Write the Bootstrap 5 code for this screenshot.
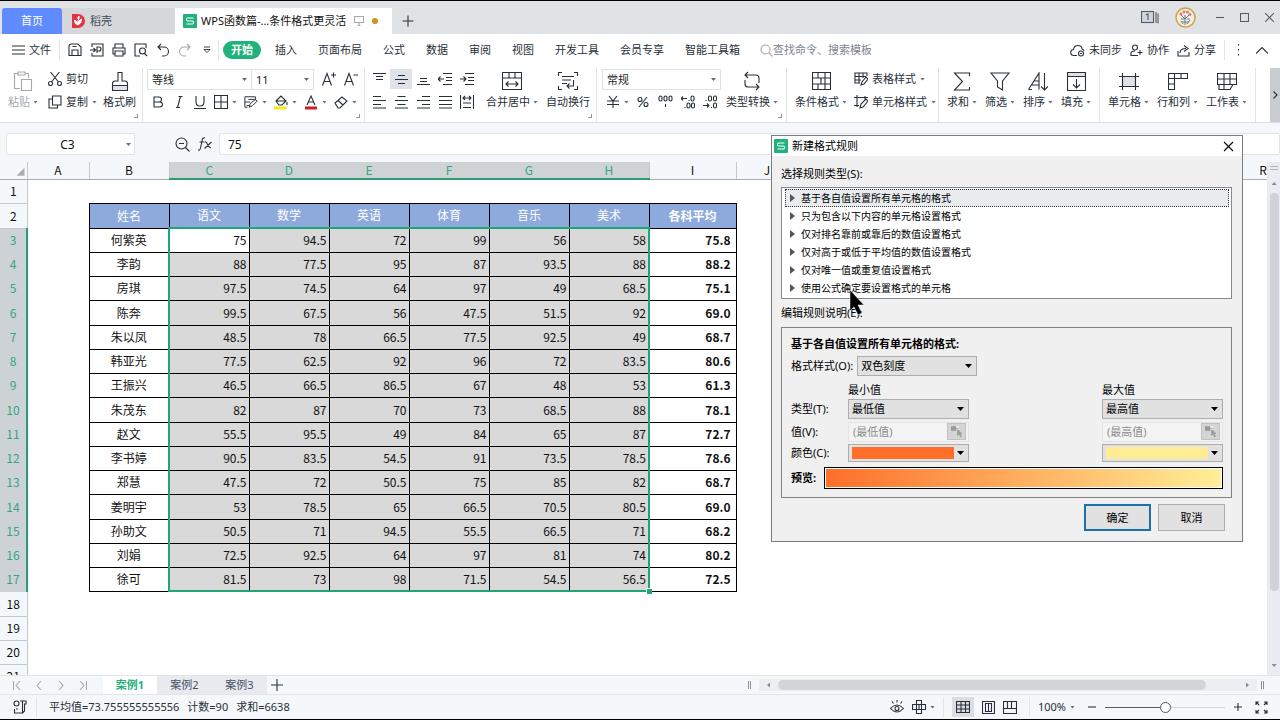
<!DOCTYPE html>
<html lang="zh-CN">
<head>
<meta charset="utf-8">
<meta name="viewport" content="width=device-width, initial-scale=1">
<title>WPS函数篇 - 条件格式更灵活</title>
<link href="https://cdn.jsdelivr.net/npm/bootstrap@5.3.0/dist/css/bootstrap.min.css" rel="stylesheet">
<style>
:root{--ink:#27303a;--green:#1fa678;--pane:#f5f8fa;--rule:#e2e5e7}
body{font-family:"Noto Sans","Noto Sans CJK SC",sans-serif;font-size:11px;line-height:16px;color:var(--ink);background:#fff}
button,input,select{font:inherit;color:inherit}
svg{display:block;fill:none;stroke:currentColor;stroke-width:1.1;flex:none}
.app{border-top:1px solid #000;border-bottom:1px solid #000}
.tbtn{border:0;background:none;padding:0;display:flex;align-items:center;justify-content:center;white-space:nowrap;color:inherit}
.vline{width:1px;height:20px;background:var(--rule);flex:none}
.caret{width:5px;height:3px;background:#6a7178;clip-path:polygon(0 0,100% 0,50% 100%);flex:none}
.faded{color:#a3a8ad}

/* title bar */
.titlebar{height:33px;background:#e0e3e5;padding-left:2px}
.wtab{height:26px;white-space:nowrap}
.wtab-home{width:60px;background:#5f8bff;color:#fff;border-radius:3px 3px 0 0}
.wtab-docer{width:113px;background:#d5d7db;color:#444c57}
.wtab-doc{width:217px;background:#fff;color:#111}
.wtab-add{margin-left:10px}
.dot{width:6px;height:6px;border-radius:50%;background:#c8961e}
.winbtns{color:#555c65;gap:16px;padding-right:6px}
.winbtns .avatar{margin-right:4px}

/* menu */
.menubar{height:32px;white-space:nowrap}
.menubar a{color:inherit;text-decoration:none}
.menutabs{gap:21px}
.menutabs .current{background:#1fb27a;color:#fff;font-weight:700;border-radius:9px;height:18px;width:38px;margin-right:-7px}
.searchbox{margin-left:20px}
.search{border:0;width:98px;padding:0;background:none;outline:0}
.search::placeholder{color:#7d8590;opacity:1}

/* ribbon */
.ribbon{height:57px;border-bottom:1px solid #dcdfe1;padding-top:2px}
.rgroup{position:relative;display:flex;align-items:flex-start;height:54px;border-right:1px solid var(--rule);flex:none;padding:0 8px}
.rgroup.launch::after{content:"";position:absolute;right:4px;bottom:4px;width:4px;height:4px;border:solid #8a9097;border-width:0 1px 1px 0}
.g-clip{gap:10px;padding-right:6px}
.g-clip .brush{margin-left:-4px}
.g-font{padding:0 6px 0 4px}
.g-align{padding:0 6px 0 3px;gap:8px}
.g-num{padding-left:5px;gap:5px}
.g-style{gap:7px;padding-right:2px}
.fontrow{gap:7px;padding-left:4px}
.tool-lg{flex-direction:column;justify-content:flex-start;height:46px}
.tool-lg .pic{height:26px;display:flex;align-items:center}
.tool-lg .cap{height:16px;display:flex;align-items:center;gap:3px}
.rrow{height:22px;display:flex;align-items:center}
.rrow+.rrow{margin-top:1px}
.cell5{width:22px;height:20px}
.cell5.on{background:#dfe2e8}
.combo{height:21px;border:1px solid #dfe2e4;border-radius:0;padding:0 14px 0 4px;font-size:11px;line-height:19px;color:#222;background-color:#fff;background-position:right 4px center;background-size:5px 3px;--bs-form-select-bg-img:url("data:image/svg+xml,%3Csvg xmlns='http://www.w3.org/2000/svg' viewBox='0 0 5 3'%3E%3Cpath d='M0 0h5L2.5 3z' fill='%23666'/%3E%3C/svg%3E")}
.combo-font{width:105px}
.combo-size{width:62px}
.combo-num{width:119px}
.more{width:10px;height:54px;background:#c9ccd0}

/* formula bar */
.fbar{height:39px;background:var(--pane);padding:10px 0 0 6px}
.fbar input{height:22px;border:1px solid #dfe3e6;background:#fff;border-radius:2px;font-size:12px;color:#111}
.namebox{width:129px}
.namewrap{position:relative}
.namewrap .caret{position:absolute;right:4px;top:10px}
.fxtools{height:22px;gap:8px;padding:0 7px 0 40px}

/* sheet */
.sheetwrap{min-height:0;background:#fff}
.sheetview{min-width:0;overflow:hidden;border-right:1px solid #e6e9eb}
.grid-sheet{table-layout:fixed;border-collapse:collapse;width:1294px;font-family:"Noto Sans CJK SC",sans-serif;font-size:12px;line-height:16px;color:#111}
.grid-sheet th,.grid-sheet td{padding:0;white-space:nowrap;overflow:hidden}
.grid-sheet thead tr{height:17px}
.grid-sheet tbody tr{height:24px}
.grid-sheet tbody tr:nth-child(4n+2){height:25px}
.grid-sheet th{font-weight:400;text-align:center;background:var(--pane);border:1px solid #c3c8cc;line-height:16px}
.grid-sheet th:first-child{border-left:0}
.grid-sheet thead th{border-top:0;border-bottom-color:#a9aeb2}
.grid-sheet thead th.hot{border:0;border-bottom:2px solid #2a9d75;background:#cfd3d6;color:#35a582}
.grid-sheet tbody th.hot{background:#cdd2d6;color:#35a582;border-color:#cdd2d6;border-right:2px solid #2a9d75}
.grid-sheet td.box{border:1px solid #000}
.grid-sheet td.head{background:#8ea9db;color:#fff;text-align:center}
.grid-sheet td.name{text-align:center}
.grid-sheet td.num{text-align:right;padding-right:2px;background:#d9d9d9}
.grid-sheet td.first{background:#fff}
.grid-sheet td.avg{text-align:right;padding-right:5px;font-weight:700}
.grid-sheet td.g-t{border-top:2px solid var(--green)}
.grid-sheet td.g-b{border-bottom:2px solid var(--green)}
.grid-sheet td.g-l{border-left:2px solid var(--green)}
.grid-sheet td.g-r{border-right:2px solid var(--green)}
.grid-sheet td.g-b.g-r{position:relative;overflow:visible}
.grid-sheet td.g-b.g-r::after{content:"";position:absolute;right:-4px;bottom:-4px;width:6px;height:6px;background:var(--green);border:solid #fff;border-width:1px 0 0 1px}
.corner{width:8px;height:8px;margin:3px 2px 0 auto;background:#a9adb0;clip-path:polygon(100% 0,100% 100%,0 100%)}
.vbar{width:12px;background:#e9ecf0}
.vbar .split{width:8px;height:4px;border:1px solid #aeb3b8;border-width:1px 0}
.vthumb{width:9px;height:398px;border-radius:4px;background:#d0d4d8}
.tri-u,.tri-d{width:5px;height:3px;background:#858a90;clip-path:polygon(50% 0,100% 100%,0 100%)}
.tri-d{clip-path:polygon(0 0,100% 0,50% 100%)}
.tri-l,.tri-r{width:3px;height:5px;background:#858a90;clip-path:polygon(0 50%,100% 0,100% 100%)}
.tri-r{clip-path:polygon(0 0,100% 50%,0 100%)}

/* sheet tabs and status */
.tabsbar{height:20px;background:var(--pane);border-top:1px solid var(--rule);border-bottom:1px solid var(--rule)}
.snav{width:103px;gap:14px;padding-left:13px}
.stab{width:55px;height:18px;background:#e8eaef;color:#454f63}
.stab.on{width:54px;background:#fff;color:#1fb27a;font-weight:700}
.grip{width:3px;height:8px;border:solid #8b9096;border-width:0 1px}
.hbar{width:498px;height:12px;background:#eceff1}
.hthumb{height:10px;border-radius:5px;background:#d1d5d8}
.status{height:24px;background:var(--pane);white-space:nowrap;padding-left:12px}
.status .on{background:#dadde1;height:20px}
.zoomer{appearance:none;-webkit-appearance:none;width:120px;height:12px;background:linear-gradient(90deg,#565b60 50%,#d4d7da 50%) center/100% 1px no-repeat}
.zoomer::-webkit-slider-thumb{-webkit-appearance:none;width:11px;height:11px;border-radius:50%;border:1px solid #555;background:#fff}

/* dialog */
.dlg{position:absolute;top:134px;right:37px;width:472px;background:#f0f0f0;border:1px solid #7c7c7c;color:#000}
.dlg-title{height:20px;background:#fff;padding:0 8px 0 2px}
.dlg-body{padding:10px 10px 10px 9px}
.dlg-body label,.dlg-body .lbl{line-height:16px;white-space:nowrap}
.rules{border:1px solid #828790;background:#fff;padding:1px 2px 1px 3px;margin:5px 0 6px;border-radius:0}
.rules .list-group-item{height:18px;border:1px solid transparent;border-radius:0;padding:0 0 0 4px;color:#000;display:flex;align-items:center;gap:5px;font-size:10px;line-height:16px;background:#fff}
.rules .list-group-item.chosen{border:1px dotted #333;background:#e8ecee}
.rules .list-group-item::before{content:"";width:5px;height:8px;margin-right:1px;background:#555;clip-path:polygon(0 0,100% 50%,0 100%)}
.panel{border:1px solid #828282;padding:8px 8px 8px 9px;margin-top:6px}
.fields{display:grid;grid-template-columns:57px 121px 1fr 121px;align-items:center;grid-template-rows:22px 22px 23px 20px}
.fields .colhead{align-self:end}
.fields .maxcol{grid-column:4}
.dsel{height:20px;padding:0 16px 0 3px;line-height:18px;font-size:11px;color:#000;background-color:#e1e1e1;border:1px solid #adadad;border-radius:0;background-position:right 4px center;background-size:7px 4px;--bs-form-select-bg-img:url("data:image/svg+xml,%3Csvg xmlns='http://www.w3.org/2000/svg' viewBox='0 0 7 4'%3E%3Cpath d='M0 0h7L3.5 4z' fill='%23000'/%3E%3C/svg%3E")}
.w-style{width:120px}
.dval{height:20px;border:1px solid #e3e3e3;background:#f3f3f3;padding:0 2px 0 0}
.dval input{width:94px;border:0;background:none;padding:0 0 0 4px;color:#8d8d8d}
.pick{width:19px;height:17px;border:1px solid #c2c2c2;background:#d4d4d4;color:#999}
.dcolor{height:18px;width:121px;border:1px solid #adadad;background:#e1e1e1;padding:2px 4px 2px 3px;justify-content:space-between}
.swatch{width:102px;height:12px}
.bcaret{width:7px;height:4px;background:#000;clip-path:polygon(0 0,100% 0,50% 100%)}
.preview{height:22px;border:1px solid #000;background:#fff;padding:1px}
.preview div{height:18px;background:linear-gradient(90deg,#ff6f2a,#ffef98)}
.dbtns{gap:7px;padding:6px 7px 0 0}
.dbtn{width:67px;height:27px;border:1px solid #adadad;background:#e1e1e1}
.dbtn.main{border:2px solid #1a70ad}
.pointer{position:absolute;left:76px;top:154px;z-index:3}
</style>
</head>
<body>
<div class="app d-flex flex-column vh-100 overflow-hidden position-relative">

<header class="titlebar d-flex align-items-end flex-shrink-0">
  <button class="tbtn wtab wtab-home">首页</button>
  <button class="tbtn wtab wtab-docer justify-content-start ps-2 gap-1">
    <svg width="16" height="14" viewBox="0 0 16 14"><path d="M2 0h6a7 7 0 0 1 0 14H2z" fill="#e23340" stroke="none"/><path d="M8 11V6M8 11Q4 10 4.500 6Q8 7 8 11Q12 9 11.500 5Q8 6 8 10M8 5Q7 3 9 2Q10 4 8 6" fill="#fff" stroke="#fff" stroke-width=".8"/></svg>稻壳</button>
  <button class="tbtn wtab wtab-doc justify-content-start ps-2 gap-1">
    <svg width="14" height="14" viewBox="0 0 14 14"><rect width="14" height="14" rx="1" fill="#20b17c" stroke="none"/><path d="M10.500 4H4.500Q3.500 4 3.500 5.500T4.500 7H9.500Q10.500 7 10.500 8.500T9.500 10H3.500" stroke="#fff"/></svg>
    <span>WPS函数篇-...条件格式更灵活</span>
    <svg class="faded ms-1" width="10" height="10" viewBox="0 0 10 10"><path d="M.5.5h9v6h-9zM3.500 9.500h3M5 6.500v3"/></svg><span class="dot ms-1"></span></button>
  <button class="tbtn wtab wtab-add" aria-label="新建"><svg width="12" height="12" viewBox="0 0 12 12" stroke-width="1.600"><path d="M6 .5v11M.5 6h11"/></svg></button>
  <div class="winbtns ms-auto align-self-center d-flex align-items-center">
    <svg width="18" height="13" viewBox="0 0 18 13"><rect x=".5" y=".5" width="12" height="11" fill="#cfd6df"/><path d="M5 4l2-1v6M15 1v11M17 2.500v10"/></svg>
    <svg class="avatar ms-n2" width="21" height="21" viewBox="0 0 21 21"><circle cx="10.500" cy="10.500" r="9.500" fill="#f2ede6" stroke="#d6a03a" stroke-width="1.500"/><path d="M10 18V8M10 12L6 8M10 12l4-4M8 17l-2-3M12 17l3-4" stroke="#5a6a6d" stroke-width=".9"/><g fill="#d3806e" stroke="none"><circle cx="6" cy="7" r="1.600"/><circle cx="9" cy="5" r="1.400"/><circle cx="12.500" cy="5" r="1.500"/><circle cx="15" cy="7.500" r="1.400"/></g><path d="M6 12h3M12 12h3M7 15h7" stroke="#77807c"/></svg>
    <svg width="8" height="9" viewBox="0 0 8 9" stroke-width="1"><path d="M0 4.500h8"/></svg>
    <svg width="9" height="9" viewBox="0 0 9 9" stroke-width="1"><path d="M.5.5h8v8h-8z"/></svg>
    <svg width="9" height="9" viewBox="0 0 9 9" stroke-width="1"><path d="M0 0l9 9M9 0L0 9"/></svg>
  </div>
</header>

<nav class="menubar d-flex align-items-center flex-shrink-0">
  <a href="#" class="d-flex align-items-center gap-1 ps-2 ms-1"><svg width="13" height="10" viewBox="0 0 13 10"><path d="M0 1h13M0 5h13M0 9h13"/></svg><span>文件</span></a>
  <div class="vline ms-2 me-2"></div>
  <div class="d-flex align-items-center gap-2">
    <button class="tbtn" aria-label="保存"><svg width="14" height="14" viewBox="0 0 14 14"><path d="M1 12.500V3.500Q1 1 3.500 1H10l3 3v8.500zM4 12.500V7h6v5.500M4.500 3.500h4"/></svg></button>
    <button class="tbtn" aria-label="输出PDF"><svg width="14" height="14" viewBox="0 0 14 14"><path d="M2 4V1h11v12H2v-3M0 7h5M3.500 5L5.500 7l-2 2M7 10V4h2q2 0 2 2t-2 2H7"/></svg></button>
    <button class="tbtn" aria-label="打印"><svg width="14" height="14" viewBox="0 0 14 14"><path d="M3 5V1h8v4M3 11H1V5h12v6h-2M3 8h8v5H3z"/></svg></button>
    <button class="tbtn" aria-label="打印预览"><svg width="14" height="14" viewBox="0 0 14 14"><path d="M6 13H1V1h11v4"/><circle cx="8.500" cy="8" r="3"/><path d="M10.500 10.500L13 13"/></svg></button>
    <button class="tbtn" aria-label="撤消"><svg width="14" height="14" viewBox="0 0 14 14"><path d="M5 1L2 4l3 3M2 4h6a4 4 0 0 1 0 9H6"/></svg></button>
    <button class="tbtn faded" aria-label="恢复"><svg width="14" height="14" viewBox="0 0 14 14"><path d="M9 1l3 3-3 3M12 4H6a4 4 0 0 0 0 9h2"/></svg></button>
    <button class="tbtn" aria-label="更多"><svg width="14" height="8" viewBox="0 0 14 8"><path d="M4 1h6M4 3.500l3 3 3-3z" stroke-width=".9"/></svg></button>
  </div>
  <div class="vline ms-1 me-1"></div>
  <div class="menutabs d-flex align-items-center">
    <a href="#" class="current d-flex align-items-center justify-content-center">开始</a>
    <a href="#">插入</a><a href="#">页面布局</a><a href="#">公式</a><a href="#">数据</a><a href="#">审阅</a><a href="#">视图</a><a href="#">开发工具</a><a href="#">会员专享</a><a href="#">智能工具箱</a>
  </div>
  <label class="searchbox d-flex align-items-center"><svg class="faded" width="13" height="13" viewBox="0 0 13 13"><circle cx="5.500" cy="5.500" r="4.500"/><path d="M9 9l3.500 3.500"/></svg><input class="search" placeholder="查找命令、搜索模板" aria-label="搜索"></label>
  <div class="ms-auto d-flex align-items-center gap-2">
    <a href="#" class="d-flex align-items-center gap-1"><svg width="15" height="13" viewBox="0 0 15 13"><path d="M7 11.500H4a3 3 0 0 1-.5-6Q4 1.500 8 1.500T12 5q2 .5 2 2"/><circle cx="11" cy="9.500" r="2.500"/><path d="M10 9.500h2"/></svg>未同步</a>
    <a href="#" class="d-flex align-items-center gap-1"><svg width="13" height="13" viewBox="0 0 13 13"><circle cx="5" cy="3.500" r="2.500"/><path d="M8 11.500H1V9.500Q1 7 5 7M10 6v5M7.500 8.500h5"/></svg>协作</a>
    <a href="#" class="d-flex align-items-center gap-1"><svg width="13" height="13" viewBox="0 0 13 13"><path d="M1 7v5h11V8M3 9Q3 4.500 9 4.500M7 1.500l4 3-4 3"/></svg>分享</a>
    <div class="vline"></div>
    <button class="tbtn ps-1" aria-label="选项"><svg width="3" height="12" viewBox="0 0 3 12" stroke-width="1.500"><path d="M1.500 0v1.500M1.500 5v1.500M1.500 10v1.500"/></svg></button>
    <button class="tbtn ps-2 pe-2 me-1" aria-label="收起"><svg width="12" height="7" viewBox="0 0 12 7"><path d="M0 6.500l6-6 6 6"/></svg></button>
  </div>
</nav>

<section class="ribbon d-flex flex-shrink-0 overflow-hidden">
  <div class="rgroup launch g-clip">
    <button class="tbtn tool-lg faded"><span class="pic"><svg width="20" height="20" viewBox="0 0 20 20"><path d="M7 17.500H1.500v-15H5M12 2.500h3.500V7M5 1h7v3H5zM8.500 8.500h10v11h-10z"/></svg></span><span class="cap">粘贴<i class="caret"></i></span></button>
    <div>
      <div class="rrow"><button class="tbtn gap-1"><svg width="14" height="14" viewBox="0 0 14 14"><path d="M2.500 0l8 10M11.500 0l-8 10"/><circle cx="2.500" cy="11.500" r="2"/><circle cx="11.500" cy="11.500" r="2"/></svg>剪切</button></div>
      <div class="rrow"><button class="tbtn gap-1"><svg width="14" height="14" viewBox="0 0 14 14"><path d="M4.500 1h8.500v9H4.500zM4.500 4H1v9h8.500v-3"/></svg>复制<i class="caret"></i></button></div>
    </div>
    <button class="tbtn tool-lg brush"><span class="pic"><svg width="18" height="21" viewBox="0 0 18 21"><path d="M1.500 14.500v5h15v-5z" fill="#dfe2e6" stroke="none"/><path d="M1.500 14.500h15M1.500 19.500v-7Q1.500 10 4 10h3V1.500h4V10h3q2.500 0 2.500 2.500v7z"/></svg></span><span class="cap">格式刷</span></button>
  </div>
  <div class="rgroup launch g-font">
    <div>
      <div class="rrow">
        <select class="form-select combo combo-font" aria-label="字体"><option>等线</option></select><select class="form-select combo combo-size border-start-0" aria-label="字号"><option>11</option></select>
        <button class="tbtn ms-2" aria-label="增大字号"><svg width="14" height="14" viewBox="0 0 14 14"><path d="M.5 13.500L5 1.500l4.500 12M2 9.500h6M9 3h5M11.500.5v5"/></svg></button>
        <button class="tbtn ms-2" aria-label="减小字号"><svg width="14" height="14" viewBox="0 0 14 14"><path d="M.5 13.500L5 1.500l4.500 12M2 9.500h6M9.500 3h4.500"/></svg></button>
      </div>
      <div class="rrow fontrow">
        <button class="tbtn" aria-label="加粗"><svg width="14" height="14" viewBox="0 0 14 14" stroke-width="2"><path d="M3 2h5q2.500 0 2.500 2.500T8 7H3zM3 7h5.500Q11.500 7 11.500 9.500T8.500 12H3z"/></svg></button>
        <button class="tbtn" aria-label="倾斜"><svg width="14" height="14" viewBox="0 0 14 14"><path d="M6.500 1.500h4M4 12.500h4M8.500 1.500l-3 11"/></svg></button>
        <button class="tbtn" aria-label="下划线"><svg width="14" height="14" viewBox="0 0 14 14"><path d="M3 1v6q0 4 4 4t4-4V1M1 13.500h12"/></svg></button>
        <button class="tbtn gap-1" aria-label="边框"><svg width="14" height="14" viewBox="0 0 14 14"><path d="M.5.5h13v13H.5zM7 .5v13M.5 7h13"/></svg><i class="caret"></i></button>
        <button class="tbtn gap-1" aria-label="绘图边框"><svg width="14" height="14" viewBox="0 0 16 14"><path d="M4 13H1V1h12v4M1 7h6M5 4h7M6 13l1-4 6-5 2 2-5 5zM3 11h3"/></svg><i class="caret"></i></button>
        <button class="tbtn gap-1" aria-label="填充颜色"><svg width="14" height="15" viewBox="0 0 14 15"><path d="M2 6l5-5 5 5-4 4H5zM2 6h10"/><path d="M13 7v3"/><path d="M0 13h13" stroke="#f5ea20" stroke-width="3"/></svg><i class="caret"></i></button>
        <button class="tbtn gap-1" aria-label="字体颜色"><svg width="14" height="15" viewBox="0 0 14 15"><path d="M3 10L7 1l4 9M4.500 7h5"/><path d="M1 13h12" stroke="#c81e28" stroke-width="3"/></svg><i class="caret"></i></button>
        <button class="tbtn gap-1" aria-label="清除"><svg width="14" height="14" viewBox="0 0 14 14"><path d="M1 8l7-6 5 4-7 7H4zM4 5.500l5 4.500"/></svg><i class="caret"></i></button>
      </div>
    </div>
  </div>
  <div class="rgroup launch g-align">
    <div>
      <div class="rrow">
        <button class="tbtn cell5" aria-label="顶端对齐"><svg width="13" height="14" viewBox="0 0 13 14"><path d="M0 1.500h13M3 4.500h7M3 7.500h7"/></svg></button>
        <button class="tbtn cell5 on" aria-label="垂直居中"><svg width="13" height="14" viewBox="0 0 13 14"><path d="M3 3.500h7M0 7.500h13M3 11.500h7"/></svg></button>
        <button class="tbtn cell5" aria-label="底端对齐"><svg width="13" height="14" viewBox="0 0 13 14"><path d="M3 6.500h7M3 9.500h7M0 12.500h13"/></svg></button>
        <button class="tbtn cell5" aria-label="减少缩进"><svg width="14" height="14" viewBox="0 0 14 14"><path d="M5 1.500h9M8 5.500h6M8 8.500h6M5 12.500h9M0 7h6M2.500 4.500L0 7l2.500 2.500"/></svg></button>
        <button class="tbtn cell5" aria-label="增加缩进"><svg width="14" height="14" viewBox="0 0 14 14"><path d="M5 1.500h9M8 5.500h6M8 8.500h6M5 12.500h9M0 7h6M3.500 4.500L6 7 3.500 9.500"/></svg></button>
      </div>
      <div class="rrow">
        <button class="tbtn cell5" aria-label="左对齐"><svg width="13" height="14" viewBox="0 0 13 14"><path d="M0 1.500h8M0 5.500h13M0 9.500h8M0 13h13"/></svg></button>
        <button class="tbtn cell5" aria-label="居中"><svg width="13" height="14" viewBox="0 0 13 14"><path d="M2.500 1.500h8M0 5.500h13M2.500 9.500h8M0 13h13"/></svg></button>
        <button class="tbtn cell5" aria-label="右对齐"><svg width="13" height="14" viewBox="0 0 13 14"><path d="M5 1.500h8M0 5.500h13M5 9.500h8M0 13h13"/></svg></button>
        <button class="tbtn cell5" aria-label="两端对齐"><svg width="13" height="14" viewBox="0 0 13 14"><path d="M0 1.500h13M0 5.500h13M0 9.500h13M0 13h13"/></svg></button>
        <button class="tbtn cell5" aria-label="分散对齐"><svg width="14" height="14" viewBox="0 0 14 14"><path d="M.5 0v14M13.500 0v14M3 3h8M5 1L3 3l2 2M9 1l2 2-2 2M3 8h8M3 12.500h8"/></svg></button>
      </div>
    </div>
    <button class="tbtn tool-lg"><span class="pic"><svg width="20" height="18" viewBox="0 0 20 18"><path d="M.5.5h19v17H.5zM.5 6h19M7 .5V6M13 .5V6M4 12h12M6.500 9.500L4 12l2.500 2.500M13.500 9.500L16 12l-2.500 2.500"/></svg></span><span class="cap">合并居中<i class="caret"></i></span></button>
    <button class="tbtn tool-lg"><span class="pic"><svg width="20" height="18" viewBox="0 0 20 18"><path d="M4 .5H.5V4M16 .5h3.500V4M4 17.500H.5V14M16 17.500h3.500V14M4 4.500h12M4 8h9M4 11.500h5M15.500 8v6H9M11.500 11.500L9 14l2.500 2.500"/></svg></span><span class="cap">自动换行</span></button>
  </div>
  <div class="rgroup launch g-num">
    <div>
      <div class="rrow"><select class="form-select combo combo-num" aria-label="数字格式"><option>常规</option></select></div>
      <div class="rrow justify-content-between ps-1 pe-1">
        <button class="tbtn gap-1" aria-label="货币"><svg width="14" height="14" viewBox="0 0 14 14"><path d="M3 1l4 5 4-5M7 6v7M1 6h12M1 9.500h12"/></svg><i class="caret"></i></button>
        <button class="tbtn" aria-label="百分比"><svg width="12" height="12" viewBox="0 0 12 12"><circle cx="3" cy="3.500" r="2"/><circle cx="9" cy="8.500" r="2"/><path d="M10 1L2 11"/></svg></button>
        <button class="tbtn" aria-label="千位分隔"><svg width="15" height="14" viewBox="0 0 15 14"><rect x="1" y="1" width="3" height="5" rx="1.500"/><rect x="6" y="1" width="3" height="5" rx="1.500"/><rect x="11" y="1" width="3" height="5" rx="1.500"/><path d="M7.500 9v3"/></svg></button>
        <button class="tbtn" aria-label="增加小数"><svg width="14" height="14" viewBox="0 0 14 14"><path d="M0 3.500h6M2 1.500l-2 2 2 2M8 5v1M4 12v1"/><rect x="10" y="1" width="3" height="5" rx="1.500"/><rect x="6" y="8" width="3" height="5" rx="1.500"/><rect x="10.500" y="8" width="3" height="5" rx="1.500"/></svg></button>
        <button class="tbtn" aria-label="减少小数"><svg width="14" height="14" viewBox="0 0 14 14"><path d="M0 10.500h6M4 8.500l2 2-2 2M3 5v1M8.500 12v1"/><rect x="5.500" y="1" width="3" height="5" rx="1.500"/><rect x="10.500" y="1" width="3" height="5" rx="1.500"/><rect x="10.500" y="8" width="3" height="5" rx="1.500"/></svg></button>
      </div>
    </div>
    <button class="tbtn tool-lg"><span class="pic"><svg width="18" height="20" viewBox="0 0 18 20"><path d="M5 1L2 4l3 3M2 4h11q3 0 3 3v5M13 13l3 3-3 3M16 16H5q-3 0-3-3V9"/></svg></span><span class="cap">类型转换<i class="caret"></i></span></button>
  </div>
  <div class="rgroup g-style">
    <button class="tbtn tool-lg"><span class="pic"><svg width="19" height="18" viewBox="0 0 19 18"><path d="M.5.5h18v17H.5zM.5 6h18M.5 12h18M6 .5V6M13 .5V12M9 6v6M6 12v5.500M13 12v5.500"/></svg></span><span class="cap">条件格式<i class="caret"></i></span></button>
    <div>
      <div class="rrow"><button class="tbtn gap-1"><svg width="14" height="14" viewBox="0 0 14 14"><path d="M6 11H1V1h12v3M1 4.500h11M1 8h6M5 1v10M9 1v5M7 13l1-3 4-5 2 2-4 5z"/></svg>表格样式<i class="caret"></i></button></div>
      <div class="rrow"><button class="tbtn gap-1"><svg width="14" height="14" viewBox="0 0 14 14"><path d="M3 0v12M0 2.500h14M11 1v4M0 10.500h5M6 13l1-4 5-5 2 2-5 6z"/></svg>单元格样式<i class="caret"></i></button></div>
    </div>
  </div>
  <div class="rgroup gap-2">
    <button class="tbtn tool-lg"><span class="pic"><svg width="18" height="19" viewBox="0 0 18 19"><path d="M16.500 4V1H1.500l8 8.500-8 8.500h15v-3"/></svg></span><span class="cap">求和<i class="caret"></i></span></button>
    <button class="tbtn tool-lg"><span class="pic"><svg width="20" height="19" viewBox="0 0 20 19"><path d="M1 1h18l-6.500 8v9l-5-3V9z"/></svg></span><span class="cap">筛选<i class="caret"></i></span></button>
    <button class="tbtn tool-lg"><span class="pic"><svg width="20" height="19" viewBox="0 0 20 19"><path d="M.5 17.500L11 1v16.500M3 13h8M6 9h5M.5 17.500H4M16.500 1v17M13 14.500l3.500 3.500 3.500-3.500"/></svg></span><span class="cap">排序<i class="caret"></i></span></button>
    <button class="tbtn tool-lg"><span class="pic"><svg width="19" height="19" viewBox="0 0 19 19"><path d="M.5.5h18v4H.5z" fill="#dfe2e6"/><path d="M.5.5h18v18H.5zM9.500 7v9M6 12.500L9.500 16l3.500-3.500"/></svg></span><span class="cap">填充<i class="caret"></i></span></button>
  </div>
  <div class="rgroup gap-2">
    <button class="tbtn tool-lg"><span class="pic"><svg width="20" height="17" viewBox="0 0 20 17"><path d="M3.500 3.500h13v10h-13z" fill="#dfe2e6"/><path d="M3.500 0v17M16.500 0v17M0 3.500h20M0 13.500h20"/></svg></span><span class="cap">单元格<i class="caret"></i></span></button>
    <button class="tbtn tool-lg"><span class="pic"><svg width="20" height="17" viewBox="0 0 20 17"><path d="M.5.5h19v5H6.500v11h-6zM.5 5.500h6M.5 11h6M6.500.5v5M13 .5v5"/></svg></span><span class="cap">行和列<i class="caret"></i></span></button>
    <button class="tbtn tool-lg"><span class="pic"><svg width="20" height="17" viewBox="0 0 20 17"><path d="M.5.5h19v11h-19zM.5 6h19M7 .5v11M13 .5v11M2 11.500v5h11l3-5M7 11.500v5"/></svg></span><span class="cap">工作表<i class="caret"></i></span></button>
  </div>
  <button class="tbtn more ms-auto" aria-label="向右滚动"><svg width="5" height="8" viewBox="0 0 5 8"><path d="M.5.500L4 4 .5 7.500"/></svg></button>
</section>

<section class="fbar d-flex align-items-start flex-shrink-0">
  <div class="namewrap"><input class="namebox text-center pe-2" value="C3" aria-label="名称框"><i class="caret"></i></div>
  <div class="fxtools d-flex align-items-center">
    <svg width="15" height="15" viewBox="0 0 15 15"><circle cx="6.500" cy="6.500" r="5.500"/><path d="M10.500 10.500l4 4M4 6.500h5"/></svg>
    <svg width="14" height="14" viewBox="0 0 14 14"><path d="M7 1Q4.500 0 4 4L2.500 11Q2 13.500 0 13M1.500 5h5M7 5q1.500-.5 2.500 2.500T13 11M13.500 5L6.500 11.500"/></svg>
  </div>
  <input class="flex-grow-1 ps-2" value="75" aria-label="编辑栏">
</section>

<main class="sheetwrap d-flex flex-grow-1">
  <div class="sheetview flex-grow-1">
    <table class="grid-sheet" id="sheet"></table>
  </div>
  <div class="vbar d-flex flex-column align-items-center pt-1">
    <div class="split mb-2"></div><div class="tri-u mt-1 mb-2"></div><div class="vthumb"></div><div class="tri-d mt-auto mb-2"></div>
  </div>
</main>

<section class="tabsbar d-flex align-items-center flex-shrink-0">
  <div class="snav d-flex align-items-center faded">
    <svg width="8" height="9" viewBox="0 0 8 9"><path d="M.5 0v9M7 0L3 4.500 7 9"/></svg>
    <svg width="8" height="9" viewBox="0 0 8 9"><path d="M6 0L2 4.500 6 9"/></svg>
    <svg width="8" height="9" viewBox="0 0 8 9"><path d="M2 0l4 4.500L2 9"/></svg>
    <svg width="8" height="9" viewBox="0 0 8 9"><path d="M7.500 0v9M1 0l4 4.500L1 9"/></svg>
  </div>
  <button class="tbtn stab on">案例1</button><button class="tbtn stab">案例2</button><button class="tbtn stab">案例3</button>
  <button class="tbtn ms-1" aria-label="新建工作表"><svg width="12" height="12" viewBox="0 0 12 12"><path d="M6 0v12M0 6h12"/></svg></button>
  <div class="ms-auto d-flex align-items-center gap-1 pe-3">
    <span class="grip me-1"></span>
    <div class="hbar d-flex align-items-center px-2 gap-2"><i class="tri-l"></i><div class="hthumb flex-grow-1 me-4"></div><i class="tri-r ms-2"></i></div>
    <span class="grip"></span>
  </div>
</section>

<footer class="status d-flex align-items-center flex-shrink-0">
  <svg width="16" height="14" viewBox="0 0 16 14"><circle cx="4.500" cy="3.500" r="2.500"/><path d="M8 1h6v3h-2M2.500 9v4h8V1M10.500 13l2-2V4M4 9h2"/></svg>
  <div class="vline ms-2 me-2"></div>
  <span class="ms-1">平均值=73.755555555556</span><span class="ms-2">计数=90</span><span class="ms-2">求和=6638</span>
  <div class="ms-auto d-flex align-items-center gap-2">
    <svg width="14" height="14" viewBox="0 0 14 14"><path d="M.5 8.500q6.500-7 13 0-6.500 7-13 0zM7 0v2.500M2 1.500l1.500 2M12 1.500l-1.500 2"/><circle cx="7" cy="8.500" r="2"/></svg>
    <button class="tbtn gap-1" aria-label="阅读模式"><svg width="14" height="14" viewBox="0 0 14 14"><path d="M4.500.5h5v13h-5zM.5 4.500h13v5H.5zM7 4.500v5"/></svg><i class="caret"></i></button>
    <div class="vline"></div>
    <button class="tbtn on px-1" aria-label="普通视图"><svg width="14" height="12" viewBox="0 0 14 12"><path d="M.5.5h13v11H.5zM.5 4h13M.5 8h13M5 .5v11M9.500.5v11"/></svg></button>
    <button class="tbtn" aria-label="页面布局"><svg width="13" height="13" viewBox="0 0 13 13"><path d="M.5.5h12v12H.5zM3.500 2.500h6v8h-6zM6.500 2.500v8"/></svg></button>
    <button class="tbtn" aria-label="分页预览"><svg width="14" height="13" viewBox="0 0 14 13"><path d="M.5.5h13v12H.5zM4.500.5v7M8.500.5v7h5M.5 7.500h8"/></svg></button>
    <div class="vline ms-1"></div>
    <button class="tbtn gap-1">100%<i class="caret"></i></button>
    <button class="tbtn ms-1" aria-label="缩小"><svg width="10" height="10" viewBox="0 0 10 10" stroke-width="2"><path d="M1 5h8"/></svg></button>
    <input type="range" class="zoomer" min="0" max="100" value="50" aria-label="显示比例">
    <button class="tbtn" aria-label="放大"><svg width="10" height="10" viewBox="0 0 10 10" stroke-width="2"><path d="M5 1v8M1 5h8"/></svg></button>
    <button class="tbtn me-2 pe-1 ms-1" aria-label="全屏"><svg width="13" height="13" viewBox="0 0 13 13"><path d="M1 4V1h3M1 1l3 3M9 1h3v3M12 1L9 4M1 9v3h3M1 12l3-3M9 12h3V9M12 12L9 9"/></svg></button>
  </div>
</footer>

<div class="dlg" role="dialog" aria-labelledby="dlgTitle">
  <div class="dlg-title d-flex align-items-center gap-1">
    <svg width="14" height="14" viewBox="0 0 14 14"><rect width="14" height="14" rx="1" fill="#20b17c" stroke="none"/><path d="M10.500 4H4.500Q3.500 4 3.500 5.500T4.500 7H9.500Q10.500 7 10.500 8.500T9.500 10H3.500" stroke="#fff"/></svg>
    <span id="dlgTitle">新建格式规则</span>
    <button class="tbtn ms-auto" aria-label="关闭"><svg width="11" height="11" viewBox="0 0 11 11"><path d="M1 1l9 9M10 1l-9 9"/></svg></button>
  </div>
  <div class="dlg-body">
    <div class="lbl">选择规则类型(S):</div>
    <div class="rules list-group">
      <button class="list-group-item chosen">基于各自值设置所有单元格的格式</button>
      <button class="list-group-item">只为包含以下内容的单元格设置格式</button>
      <button class="list-group-item">仅对排名靠前或靠后的数值设置格式</button>
      <button class="list-group-item">仅对高于或低于平均值的数值设置格式</button>
      <button class="list-group-item">仅对唯一值或重复值设置格式</button>
      <button class="list-group-item">使用公式确定要设置格式的单元格</button>
    </div>
    <div class="lbl">编辑规则说明(E):</div>
    <div class="panel">
      <div class="lbl fw-bold mb-1">基于各自值设置所有单元格的格式:</div>
      <div class="d-flex align-items-center"><label for="fs" class="me-1">格式样式(O):</label><select id="fs" class="form-select dsel w-style"><option>双色刻度</option></select></div>
      <div class="fields">
        <span></span><span class="lbl colhead">最小值</span><span class="lbl colhead maxcol">最大值</span>
        <label for="tMin">类型(T):</label><select id="tMin" class="form-select dsel"><option>最低值</option></select><select class="form-select dsel maxcol" aria-label="最大值类型"><option>最高值</option></select>
        <label for="vMin">值(V):</label>
        <div class="dval d-flex align-items-center justify-content-between"><input id="vMin" value="(最低值)" disabled><button class="tbtn pick" disabled aria-label="选取"><svg width="13" height="13" viewBox="0 0 13 13"><path d="M1 1h8v4H1z" fill="#eee" stroke="none"/><path d="M1 1.500h5v4H1M6 3.500h3M7.500 4.500v6l1.500-1.500 1.500 3 1-.5-1.500-3h2z" fill="#999" stroke-width=".6"/></svg></button></div>
        <div class="dval maxcol d-flex align-items-center justify-content-between"><input value="(最高值)" disabled aria-label="最大值"><button class="tbtn pick" disabled aria-label="选取"><svg width="13" height="13" viewBox="0 0 13 13"><path d="M1 1h8v4H1z" fill="#eee" stroke="none"/><path d="M1 1.500h5v4H1M6 3.500h3M7.500 4.500v6l1.500-1.500 1.500 3 1-.5-1.500-3h2z" fill="#999" stroke-width=".6"/></svg></button></div>
        <label for="cMin">颜色(C):</label><button id="cMin" class="tbtn dcolor"><span class="swatch" style="background:#ff6f2a"></span><i class="bcaret"></i></button><button class="tbtn dcolor maxcol" aria-label="最大值颜色"><span class="swatch" style="background:#ffed96"></span><i class="bcaret"></i></button>
      </div>
      <div class="d-flex align-items-center mt-1"><span class="lbl fw-bold me-2">预览:</span><div class="preview flex-grow-1"><div></div></div></div>
    </div>
    <div class="dbtns d-flex justify-content-end"><button class="tbtn dbtn main">确定</button><button class="tbtn dbtn">取消</button></div>
  </div>
  <svg class="pointer" width="16" height="28" viewBox="0 0 16 28"><path d="M2 0v21l4-4 4 8 4-2-4-8h6z" fill="#000" stroke="#fff" stroke-width=".5"/></svg>
</div>
</div>

<script>
const widths=[27,62,80,80,80,80,80,80,80,87,62,62,62,62,62,62,62,62,62];
const heads=['姓名','语文','数学','英语','体育','音乐','美术','各科平均'];
const rows=[
['何紫英',75,94.5,72,99,56,58,'75.8'],['李韵',88,77.5,95,87,93.5,88,'88.2'],['房琪',97.5,74.5,64,97,49,68.5,'75.1'],
['陈奔',99.5,67.5,56,47.5,51.5,92,'69.0'],['朱以凤',48.5,78,66.5,77.5,92.5,49,'68.7'],['韩亚光',77.5,62.5,92,96,72,83.5,'80.6'],
['王振兴',46.5,66.5,86.5,67,48,53,'61.3'],['朱茂东',82,87,70,73,68.5,88,'78.1'],['赵文',55.5,95.5,49,84,65,87,'72.7'],
['李书婷',90.5,83.5,54.5,91,73.5,78.5,'78.6'],['郑慧',47.5,72,50.5,75,85,82,'68.7'],['姜明宇',53,78.5,65,66.5,70.5,80.5,'69.0'],
['孙助文',50.5,71,94.5,55.5,66.5,71,'68.2'],['刘娟',72.5,92.5,64,97,81,74,'80.2'],['徐可',81.5,73,98,71.5,54.5,56.5,'72.5']];
const cols='ABCDEFGHIJKLMNOPQR';
let h='<colgroup>'+widths.map(w=>`<col style="width:${w}px">`).join('')+'</colgroup><thead><tr><th><div class="corner"></div></th>';
h+=[...cols].map((c,i)=>`<th class="${i>1&&i<8?'hot':''}">${c}</th>`).join('')+'</tr></thead><tbody>';
for(let r=1;r<=21;r++){
  h+=`<tr><th class="${r>2&&r<18?'hot':''}">${r}</th><td></td>`;
  if(r===2) h+=heads.map((t,i)=>`<td class="box head ${i===7?'fw-bold':''}">${t}</td>`).join('');
  else if(r>2&&r<18) h+=rows[r-3].map((v,i)=>{
    let k='box ';
    if(i===0)k+='name';else if(i===7)k+='avg';
    else k+='num'+(i===1?' g-l':'')+(i===6?' g-r':'')+(r===3?' g-t':'')+(r===17?' g-b':'')+(r===3&&i===1?' first':'');
    return `<td class="${k}">${v}</td>`}).join('');
  else h+='<td></td>'.repeat(8);
  h+='<td></td>'.repeat(9)+'</tr>';
}
document.getElementById('sheet').innerHTML=h+'</tbody>';
</script>
<script src="https://cdn.jsdelivr.net/npm/bootstrap@5.3.0/dist/js/bootstrap.bundle.min.js"></script>
</body>
</html>
